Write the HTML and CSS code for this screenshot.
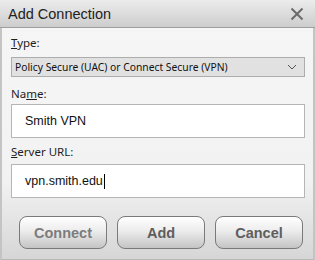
FILE: index.html
```html
<!DOCTYPE html>
<html lang="en">
<head>
  <meta charset="UTF-8" />
  <meta name="viewport" content="width=device-width, initial-scale=1.0" />
  <title>Add Connection</title>
  <link rel="stylesheet" href="styles.css">
</head>
<body>
  <div class="dialog">
    <div class="titlebar">
      <span class="title">Add Connection</span>
      <svg class="close" width="14" height="14" viewBox="0 0 14 14">
        <path d="M1.5 1.5 L12.5 12.5 M12.5 1.5 L1.5 12.5" stroke="#6b6b6b" stroke-width="2" fill="none" />
      </svg>
    </div>

    <div class="content">
      <label class="label label-type"><u>T</u>ype:</label>
      <div class="select">
        <span>Policy Secure (UAC) or Connect Secure (VPN)</span>
        <svg width="10" height="6" viewBox="0 0 10 6">
          <path d="M1 1 L5 5 L9 1" stroke="#555" stroke-width="1" fill="none" />
        </svg>
      </div>

      <label class="label label-name">Na<u>m</u>e:</label>
      <div class="input">Smith VPN</div>

      <label class="label label-url"><u>S</u>erver URL:</label>
      <div class="input">vpn.smith.edu<span class="caret"></span></div>
    </div>

    <div class="buttons">
      <button class="btn btn-disabled">Connect</button>
      <button class="btn">Add</button>
      <button class="btn">Cancel</button>
    </div>
  </div>
</body>
</html>
```

FILE: styles.css
```css
body {
  margin: 0;
  font-family: 'Liberation Sans', Arial, sans-serif;
}
.dialog {
  width: 315px;
  height: 260px;
  box-sizing: border-box;
  border-left: 2px solid #c4c4c4;
  border-right: 2px solid #c4c4c4;
  border-bottom: 1px solid #b8b8b8;
  background: linear-gradient(to bottom, #f6f6f6 0%, #f2f2f2 70%, #d6d6d6 100%);
  display: flex;
  flex-direction: column;
}
.titlebar {
  height: 27px;
  margin: 0 -2px;
  border-bottom: 1px solid #9e9e9e;
  background: linear-gradient(to bottom, #ececec, #cdcdcd);
  display: flex;
  align-items: center;
  justify-content: space-between;
  padding: 0 11px 0 8px;
}
.title {
  font-size: 14.5px;
  color: #222;
}
.close {
  display: block;
}
.content {
  padding: 7px 8px 0 9px;
  display: flex;
  flex-direction: column;
}
.label {
  font-family: 'Noto Sans', sans-serif;
  font-size: 11.5px;
  line-height: 16px;
  color: #1e1e1e;
}
.label-name {
  margin-top: 9px;
}
.label-url {
  margin-top: 6px;
}
.select {
  margin-top: 6px;
  height: 20px;
  box-sizing: border-box;
  border: 1px solid #adadad;
  background: #e1e1e1;
  display: flex;
  align-items: center;
  justify-content: space-between;
  padding: 0 7px 0 3px;
  font-family: 'Noto Sans', sans-serif;
  font-size: 10.3px;
  color: #111;
}
.input {
  margin-top: 2px;
  height: 34px;
  box-sizing: border-box;
  border: 1px solid #b5b5b5;
  background: #fff;
  display: flex;
  align-items: center;
  padding-left: 13px;
  font-size: 12.5px;
  color: #111;
}
.label-url + .input {
  margin-top: 4px;
}
.caret {
  display: inline-block;
  width: 1px;
  height: 15px;
  background: #000;
  margin-left: 1px;
}
.buttons {
  display: flex;
  gap: 10px;
  padding-left: 17px;
  margin-top: 18px;
}
.btn {
  width: 88px;
  height: 33px;
  box-sizing: border-box;
  border: 1px solid #7a7a7a;
  border-radius: 8px;
  background: linear-gradient(to bottom, #ffffff 0%, #ececec 45%, #c4c4c4 100%);
  font-family: 'Liberation Sans', Arial, sans-serif;
  font-weight: bold;
  font-size: 14.5px;
  color: #5e5e5e;
  padding: 0;
}
.btn-disabled {
  color: #7c7c7c;
}
```
